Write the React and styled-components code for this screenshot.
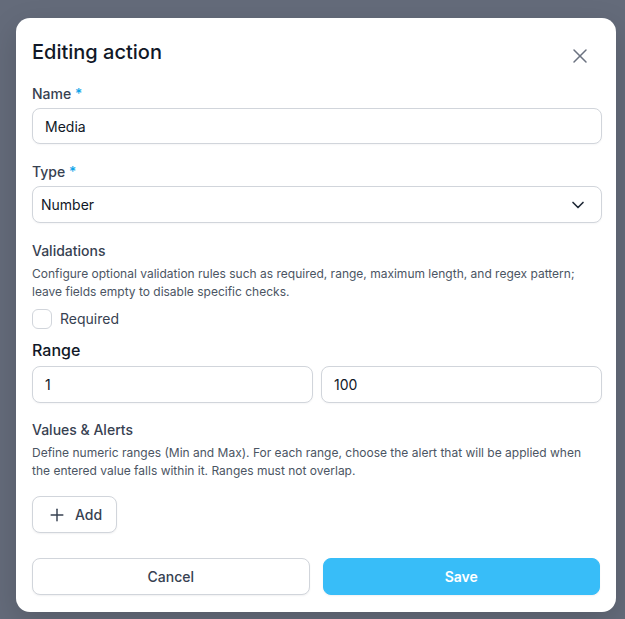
import React from "react";
import styled, { createGlobalStyle } from "styled-components";
import { X, ChevronDown, Plus } from "lucide-react";

const Global = createGlobalStyle`
  html, body { margin: 0; padding: 0; }
  body {
    background: #646b7a;
    font-family: Inter, "Noto Sans", sans-serif;
    -webkit-font-smoothing: antialiased;
  }
  * { box-sizing: border-box; }
`;

const Page = styled.div`
  min-height: 619px;
  padding: 18px 0 0 16px;
`;

const Modal = styled.div`
  width: 600px;
  height: 594px;
  background: #ffffff;
  border-radius: 14px;
  padding: 20px 14px 17px 16px;
  display: flex;
  flex-direction: column;
  box-shadow: 0 10px 30px rgba(0, 0, 0, 0.15);
`;

const Header = styled.div`
  display: flex;
  justify-content: space-between;
  align-items: flex-start;
`;

const Title = styled.h2`
  margin: 0;
  font-size: 20px;
  line-height: 28px;
  font-weight: 500;
  color: #111827;
`;

const CloseButton = styled.button`
  margin: 6px 10px 0 0;
  width: 24px;
  height: 24px;
  padding: 0;
  border: none;
  background: transparent;
  color: #6b7280;
  display: flex;
  align-items: center;
  justify-content: center;
`;

const Label = styled.div`
  margin-top: ${(p) => p.$mt || 18}px;
  font-size: 14px;
  line-height: 20px;
  font-weight: 500;
  color: #374151;
`;

const Star = styled.span`
  color: #0ea5e9;
`;

const Input = styled.div`
  margin-top: 4px;
  height: ${(p) => p.$h || 37}px;
  border: 1px solid #d1d5db;
  border-radius: 8px;
  padding: 0 ${(p) => p.$pr || 12}px 0 ${(p) => p.$pl || 12}px;
  display: flex;
  align-items: center;
  justify-content: space-between;
  font-size: 14px;
  color: #111827;
  background: #fff;
  box-shadow: 0 1px 2px rgba(16, 24, 40, 0.04);
`;

const Description = styled.p`
  margin: 4px 0 0;
  font-size: 12px;
  line-height: 18px;
  color: #4b5563;
`;

const CheckRow = styled.label`
  margin-top: 8px;
  display: flex;
  align-items: center;
  gap: 8px;
  font-size: 14px;
  line-height: 20px;
  color: #374151;
`;

const CheckBox = styled.span`
  width: 20px;
  height: 20px;
  border: 1px solid #d1d5db;
  border-radius: 6px;
  background: #fff;
`;

const SectionTitle = styled.div`
  margin-top: 9px;
  font-size: 16px;
  line-height: 24px;
  font-weight: 500;
  color: #111827;
`;

const RangeGrid = styled.div`
  display: grid;
  grid-template-columns: 1fr 1fr;
  gap: 8px;
`;

const AddButton = styled.button`
  margin-top: 16px;
  align-self: flex-start;
  height: 37px;
  padding: 0 14px;
  display: flex;
  align-items: center;
  gap: 8px;
  border: 1px solid #d1d5db;
  border-radius: 8px;
  background: #fff;
  font-family: inherit;
  font-size: 14px;
  font-weight: 500;
  color: #374151;
  box-shadow: 0 1px 2px rgba(16, 24, 40, 0.06);
`;

const Footer = styled.div`
  margin-top: auto;
  padding-right: 2px;
  display: grid;
  grid-template-columns: 1fr 1fr;
  gap: 13px;
`;

const FooterButton = styled.button`
  height: 37px;
  border-radius: 8px;
  font-family: inherit;
  font-size: 14px;
  font-weight: ${(p) => (p.$primary ? 600 : 500)};
  color: ${(p) => (p.$primary ? "#ffffff" : "#374151")};
  background: ${(p) => (p.$primary ? "#38bdf8" : "#ffffff")};
  border: 1px solid ${(p) => (p.$primary ? "#38bdf8" : "#d1d5db")};
  box-shadow: 0 1px 2px rgba(16, 24, 40, 0.06);
`;

export default function App() {
  return (
    <>
      <Global />
      <Page>
        <Modal>
          <Header>
            <Title>Editing action</Title>
            <CloseButton aria-label="Close">
              <X size={24} strokeWidth={1.5} />
            </CloseButton>
          </Header>

          <Label $mt={16}>
            Name <Star>*</Star>
          </Label>
          <Input $h={36}>Media</Input>

          <Label>
            Type <Star>*</Star>
          </Label>
          <Input $pl={8} $pr={13}>
            <span>Number</span>
            <ChevronDown size={20} strokeWidth={2} color="#1f2937" />
          </Input>

          <Label>Validations</Label>
          <Description>
            Configure optional validation rules such as required, range, maximum length, and regex pattern;
            leave fields empty to disable specific checks.
          </Description>
          <CheckRow>
            <CheckBox />
            Required
          </CheckRow>

          <SectionTitle>Range</SectionTitle>
          <RangeGrid>
            <Input>1</Input>
            <Input>100</Input>
          </RangeGrid>

          <Label $mt={17}>Values &amp; Alerts</Label>
          <Description>
            Define numeric ranges (Min and Max). For each range, choose the alert that will be applied when
            the entered value falls within it. Ranges must not overlap.
          </Description>

          <AddButton>
            <Plus size={20} strokeWidth={1.75} />
            Add
          </AddButton>

          <Footer>
            <FooterButton>Cancel</FooterButton>
            <FooterButton $primary>Save</FooterButton>
          </Footer>
        </Modal>
      </Page>
    </>
  );
}
